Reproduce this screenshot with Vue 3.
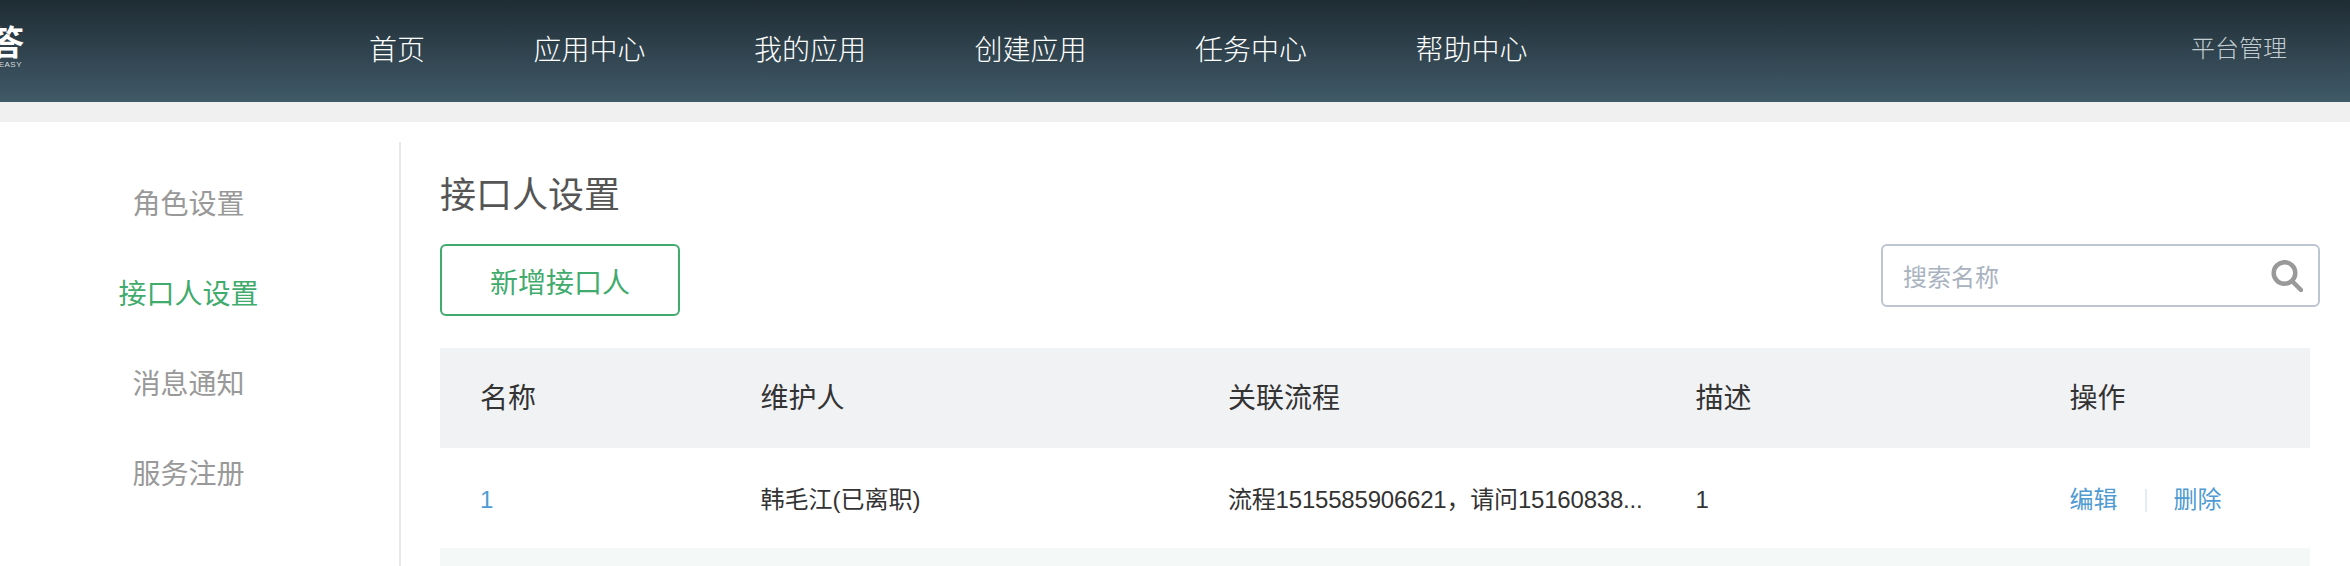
<template>
  <div class="page">
    <header class="topbar">
      <div class="logo">
        <span class="logo-mark">答</span>
        <span class="logo-sub">LOOK EASY</span>
      </div>
      <nav class="nav">
        <a v-for="item in navItems" :key="item">{{ item }}</a>
      </nav>
      <a class="admin">平台管理</a>
    </header>
    <div class="strip" />

    <div class="content">
      <aside class="side">
        <a
          v-for="item in sideItems"
          :key="item"
          :class="{ active: item === '接口人设置' }"
        >{{ item }}</a>
      </aside>

      <main class="main">
        <h1>接口人设置</h1>
        <div class="toolbar">
          <button class="add">新增接口人</button>
          <div class="search">
            <input type="text" placeholder="搜索名称" />
            <svg width="32" height="32" viewBox="0 0 32 32" fill="none" stroke="#999" stroke-width="4.5">
              <circle cx="13.5" cy="13" r="10.8" />
              <path d="M21 21l9 9" stroke-linecap="round" />
            </svg>
          </div>
        </div>

        <table>
          <colgroup>
            <col class="w15" />
            <col class="w25" />
            <col class="w25" />
            <col class="w20" />
            <col class="w15" />
          </colgroup>
          <thead>
            <tr>
              <th>名称</th>
              <th>维护人</th>
              <th>关联流程</th>
              <th>描述</th>
              <th>操作</th>
            </tr>
          </thead>
          <tbody>
            <tr>
              <td><a class="link">1</a></td>
              <td>韩毛江(已离职)</td>
              <td class="flow">流程1515585906621，请问15160838...</td>
              <td>1</td>
              <td>
                <div class="ops">
                  <a class="link">编辑</a>
                  <i />
                  <a class="link">删除</a>
                </div>
              </td>
            </tr>
            <tr class="stripe">
              <td colspan="5" />
            </tr>
          </tbody>
        </table>
      </main>
    </div>
  </div>
</template>

<script setup>
const navItems = ['首页', '应用中心', '我的应用', '创建应用', '任务中心', '帮助中心']
const sideItems = ['角色设置', '接口人设置', '消息通知', '服务注册']
</script>

<style>
html,
body {
  overflow: hidden;
  background: #fff;
}
</style>

<style scoped>
.page {
  width: 2350px;
  height: 566px;
  overflow: hidden;
  font-family: 'Liberation Sans', 'Noto Sans CJK SC', sans-serif;
  color: #333;
}

.topbar {
  height: 102px;
  display: flex;
  align-items: center;
  background: linear-gradient(180deg, #1f2c34 0%, #405a68 100%);
}

.logo {
  width: 34px;
  margin-left: -10px;
  margin-right: 345px;
  margin-top: -6px;
  display: flex;
  flex-direction: column;
  align-items: flex-end;
  color: #fff;
}

.logo-mark {
  font-size: 34px;
  line-height: 34px;
  font-weight: 700;
}

.logo-sub {
  font-size: 8px;
  line-height: 10px;
  white-space: nowrap;
  margin-right: 2px;
  color: #d5dcdf;
  letter-spacing: 0.5px;
}

.nav {
  display: flex;
  gap: 108.5px;
  margin-top: -7px;
  font-size: 28px;
  font-weight: 300;
  color: #fff;
}

.admin {
  margin-left: auto;
  margin-right: 63px;
  margin-top: -10px;
  font-size: 24px;
  font-weight: 300;
  color: #c4cdd1;
}

.strip {
  height: 20px;
  background: #f0f0f0;
}

.content {
  display: flex;
  padding-top: 20px;
  height: 424px;
}

.side {
  width: 377px;
  padding: 18px 22px 0 0;
  border-right: 2px solid #e8e8e8;
  display: flex;
  flex-direction: column;
  align-items: center;
  font-size: 28px;
  color: #999;
}

.side a {
  height: 90px;
  line-height: 90px;
}

.side a.active {
  color: #41ab6d;
}

.main {
  margin-left: 39px;
  width: 1870px;
}

h1 {
  margin: 29px 0 23px;
  font-size: 36px;
  line-height: 50px;
  font-weight: 400;
  color: #555;
}

.toolbar {
  display: flex;
  justify-content: space-between;
  align-items: flex-start;
  margin-right: -10px;
}

.add {
  width: 240px;
  height: 72px;
  padding: 2px 0 0;
  background: #fff;
  border: 2px solid #41ab6d;
  border-radius: 6px;
  font: inherit;
  font-size: 28px;
  color: #41ab6d;
}

.search {
  width: 439px;
  height: 63px;
  box-sizing: border-box;
  display: flex;
  align-items: center;
  padding: 0 15px 0 20px;
  border: 2px solid #bcc5d1;
  border-radius: 6px;
}

.search input {
  flex: 1;
  min-width: 0;
  padding: 5px 0 0;
  border: none;
  outline: none;
  font: inherit;
  font-size: 24px;
}

.search input::placeholder {
  color: #a9b3bf;
  opacity: 1;
}

table {
  width: 100%;
  margin-top: 32px;
  table-layout: fixed;
  border-collapse: collapse;
}

.w15 {
  width: 15%;
}

.w25 {
  width: 25%;
}

.w20 {
  width: 20%;
}

th,
td {
  box-sizing: border-box;
  height: 100px;
  padding: 0 0 0 40px;
  text-align: left;
  white-space: nowrap;
}

th {
  padding-top: 2px;
  background: #f1f2f4;
  font-size: 28px;
  line-height: 32px;
  font-weight: 400;
  color: #333;
}

td {
  padding-top: 4px;
  font-size: 24px;
  line-height: 28px;
  color: #333;
}

.flow {
  letter-spacing: -0.2px;
}

.stripe td {
  background: #f4f8f7;
}

.link {
  color: #4f9bd2;
}

.ops {
  display: flex;
  align-items: center;
  gap: 27px;
}

.ops i {
  width: 2px;
  height: 23px;
  background: #e5ebf0;
}
</style>
